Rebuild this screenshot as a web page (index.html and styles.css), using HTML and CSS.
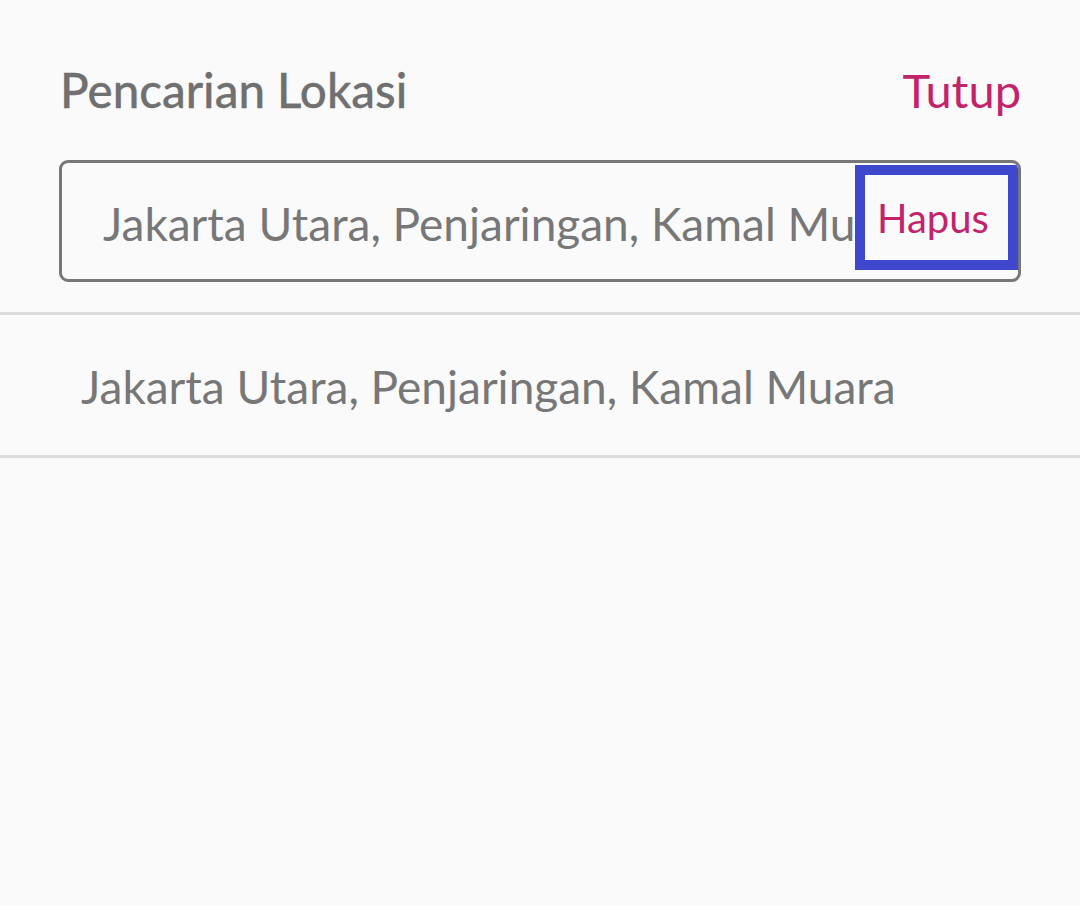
FILE: index.html
```html
<!DOCTYPE html>
<html lang="id">
<head>
<meta charset="utf-8">
<link rel="stylesheet" href="styles.css">
</head>
<body>
<div class="page">
  <header class="header">
    <h1 class="title">Pencarian Lokasi</h1>
    <span class="close">Tutup</span>
  </header>
  <div class="search-wrap">
    <div class="search">
      <span class="search-text">Jakarta Utara, Penjaringan, Kamal Muara</span>
      <span class="clear"><span class="clear-label">Hapus</span></span>
    </div>
  </div>
  <ul class="results">
    <li class="result">Jakarta Utara, Penjaringan, Kamal Muara</li>
  </ul>
</div>
</body>
</html>
```
FILE: styles.css
```css
html, body {
  margin: 0;
  padding: 0;
  background: #fafafa;
}
.page {
  width: 1080px;
  height: 906px;
  font-family: Lato, "Open Sans", sans-serif;
  color: #767676;
}
.header {
  display: flex;
  justify-content: space-between;
  align-items: baseline;
  padding: 58px 59px 0 60px;
  height: 102px;
  box-sizing: border-box;
}
.title {
  margin: 0;
  font-size: 47.5px;
  font-weight: 500;
  line-height: 64px;
  color: #707070;
  -webkit-text-stroke: 0.3px #707070;
}
.close {
  font-size: 47px;
  line-height: 64px;
  color: #c2246b;
}
.search-wrap {
  padding: 58px 59px 0 59px;
}
.search {
  position: relative;
  height: 122px;
  box-sizing: border-box;
  border: 3px solid #777;
  border-radius: 9px;
  display: flex;
  align-items: center;
  padding-left: 41px;
  overflow: hidden;
}
.search-text {
  font-size: 46px;
  white-space: nowrap;
  overflow: hidden;
  width: 752px;
  color: #777;
  padding-top: 4px;
}
.clear {
  position: absolute;
  right: 0;
  top: 2px;
  width: 163px;
  height: 105px;
  box-sizing: border-box;
  border: 10px solid #3f48cc;
  background: #fafafa;
  display: flex;
  align-items: center;
  padding-left: 12px;
}
.clear-label {
  font-size: 40px;
  color: #c2246b;
}
.results {
  list-style: none;
  margin: 30px 0 0 0;
  padding: 0;
  border-top: 3px solid #ddd;
}
.result {
  height: 143px;
  box-sizing: border-box;
  border-bottom: 3px solid #ddd;
  display: flex;
  align-items: center;
  padding-left: 81px;
  padding-top: 2px;
  font-size: 46px;
  color: #777;
}
```
